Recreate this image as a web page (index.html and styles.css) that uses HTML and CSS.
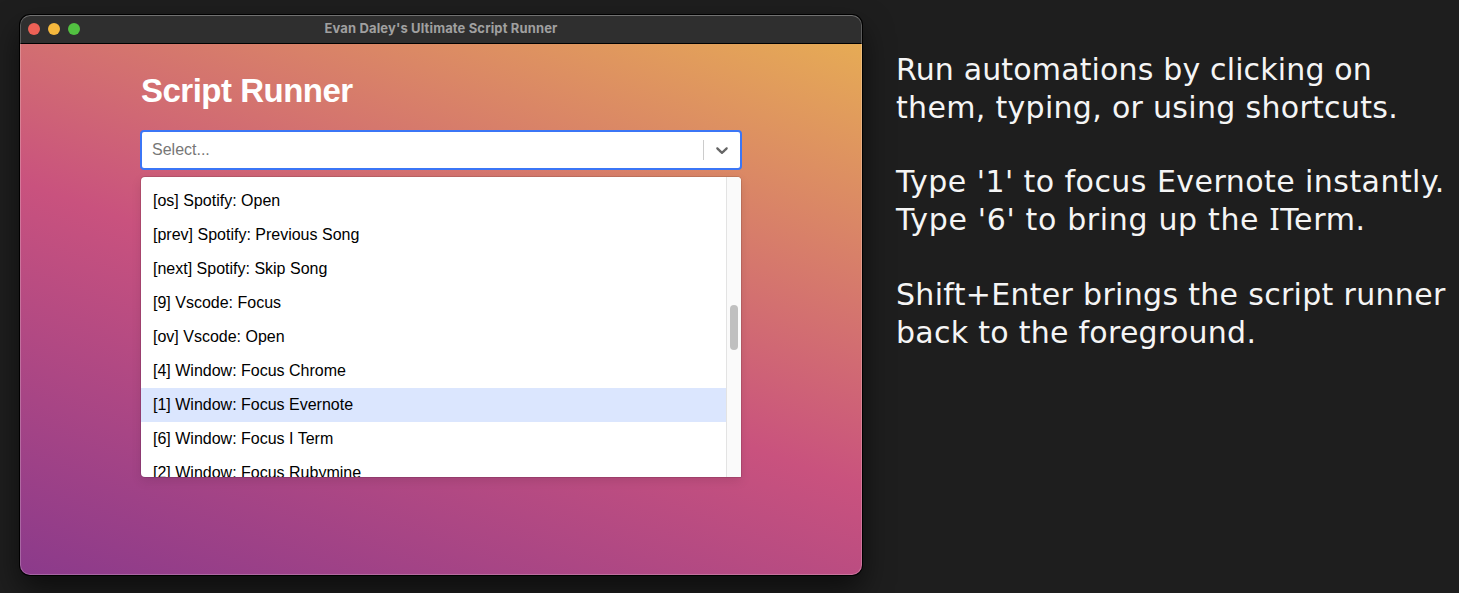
FILE: index.html
```
<!DOCTYPE html>
<html lang="en">
<head>
<meta charset="utf-8">
<title>Evan Daley's Ultimate Script Runner</title>
<link rel="stylesheet" href="styles.css">
</head>
<body>
<main class="window">
  <header class="titlebar">
    <div class="lights"><i class="light red"></i><i class="light yellow"></i><i class="light green"></i></div>
    <span class="window-title">Evan Daley's Ultimate Script Runner</span>
  </header>
  <section class="content">
    <h1 class="heading">Script Runner</h1>
    <div class="select">
      <span class="placeholder">Select...</span>
      <span class="separator"></span>
      <svg class="chevron" width="20" height="20" viewBox="0 0 20 20"><path fill="#666" d="M4.516 7.548c0.436-0.446 1.043-0.481 1.576 0l3.908 3.747 3.908-3.747c0.533-0.481 1.141-0.446 1.574 0 0.436 0.445 0.408 1.197 0 1.615-0.406 0.418-4.695 4.502-4.695 4.502-0.217 0.223-0.502 0.335-0.787 0.335s-0.57-0.112-0.789-0.335c0 0-4.287-4.084-4.695-4.502s-0.436-1.17 0-1.615z"/></svg>
    </div>
    <div class="menu">
      <ul class="options">
        <li class="option"><span>[os] Spotify: Open</span></li>
        <li class="option"><span>[prev] Spotify: Previous Song</span></li>
        <li class="option"><span>[next] Spotify: Skip Song</span></li>
        <li class="option"><span>[9] Vscode: Focus</span></li>
        <li class="option"><span>[ov] Vscode: Open</span></li>
        <li class="option"><span>[4] Window: Focus Chrome</span></li>
        <li class="option focused"><span>[1] Window: Focus Evernote</span></li>
        <li class="option"><span>[6] Window: Focus I Term</span></li>
        <li class="option"><span>[2] Window: Focus Rubymine</span></li>
      </ul>
      <div class="scrollbar"><div class="thumb"></div></div>
    </div>
  </section>
</main>
<aside class="notes">
  <p><span class="track-xs">Run automations by clicking on</span><br><span class="track-m">them, typing, or using shortcuts.</span></p>
  <p><span class="track-l">Type '1' to focus Evernote instantly.</span><br><span class="track-xl">Type '6' to bring up the <span class="serif-i">I</span>Term.</span></p>
  <p><span class="track-m">Shift+Enter brings the script runner</span><br><span class="track-s">back to the foreground.</span></p>
</aside>
</body>
</html>
```
FILE: styles.css
```
* { box-sizing: border-box; }
body {
  margin: 0;
  height: 593px;
  padding: 15px 0 0 20px;
  display: flex;
  align-items: flex-start;
  overflow: hidden;
  background: #1e1e1e;
  font-family: "Liberation Sans", Arial, sans-serif;
}
.window {
  position: relative;
  flex: none;
  width: 842px;
  height: 560px;
  border-radius: 10px;
  overflow: hidden;
  box-shadow: 0 0 0 1px #000, 0 14px 30px rgba(0, 0, 0, 0.6);
}
/* Light rim around the window edge */
.window::after {
  content: "";
  position: absolute;
  inset: 0;
  border: 1px solid rgba(255, 255, 255, 0.22);
  border-top-color: rgba(255, 255, 255, 0.32);
  border-radius: 10px;
}
.titlebar {
  height: 29px;
  display: grid;
  grid-template-columns: 120px 1fr 120px;
  align-items: center;
  background: #2f2f2f;
  border-bottom: 1px solid #000;
}
.lights { display: flex; gap: 8px; padding-left: 8px; }
.light { width: 12px; height: 12px; border-radius: 50%; }
.red { background: #ed6156; }
.yellow { background: #f5b83d; }
.green { background: #52c041; }
.window-title {
  padding-bottom: 1px;
  text-align: center;
  font: bold 13px/15px Inter, sans-serif;
  letter-spacing: 0.14px;
  color: #a0a0a0;
}
.content {
  height: 531px;
  padding: 28px 120px 0;
  background: linear-gradient(20deg, #8b3a8b 0%, #c9527e 47%, #e6ab55 100%);
}
.heading {
  margin: 0 0 20px 1px;
  font-size: 33px;
  line-height: 38px;
  letter-spacing: -0.5px;
  color: #fff;
}
.select {
  width: 602px;
  height: 40px;
  display: flex;
  align-items: center;
  padding: 0 8px 0 10px;
  background: #fff;
  border: 2px solid #3b76f6;
  border-radius: 4px;
}
.placeholder { flex: 1; font-size: 16px; color: #777; }
.separator { width: 1px; height: 20px; margin-right: 8px; background: #ccc; }
.menu {
  width: 600px;
  height: 300px;
  margin: 7px 0 0 1px;
  display: flex;
  overflow: hidden;
  background: #fff;
  border-radius: 4px 4px 1px 4px;
  box-shadow: 0 0 0 1px rgba(0, 0, 0, 0.1), 0 4px 11px rgba(0, 0, 0, 0.1);
}
.options { flex: 1; margin: 0; padding: 7px 0 0; list-style: none; }
.option { height: 34px; padding-left: 12px; font-size: 16px; line-height: 34px; color: #000; }
.focused { background: #dbe6fe; }
.scrollbar { width: 15px; padding: 128px 0 0 3px; background: #fafafa; border-left: 1px solid #e3e3e3; }
.thumb { width: 8px; height: 45px; border-radius: 4px; background: #c0c0c0; }
.notes {
  padding: 36px 0 0 34px;
  font: 30px/38px "DejaVu Sans", Verdana, sans-serif;
  color: #f5f5f5;
  white-space: nowrap;
}
.notes p { height: 76px; margin: 0 0 36px; }
.notes p + p { margin-bottom: 37px; }
.track-xs { letter-spacing: 0.15px; }
.track-s { letter-spacing: 0.27px; }
.track-m { letter-spacing: 0.31px; }
.track-l { letter-spacing: 0.45px; }
.track-xl { letter-spacing: 0.66px; }
.serif-i { font-family: "Noto Sans", sans-serif; line-height: 1; }
```
